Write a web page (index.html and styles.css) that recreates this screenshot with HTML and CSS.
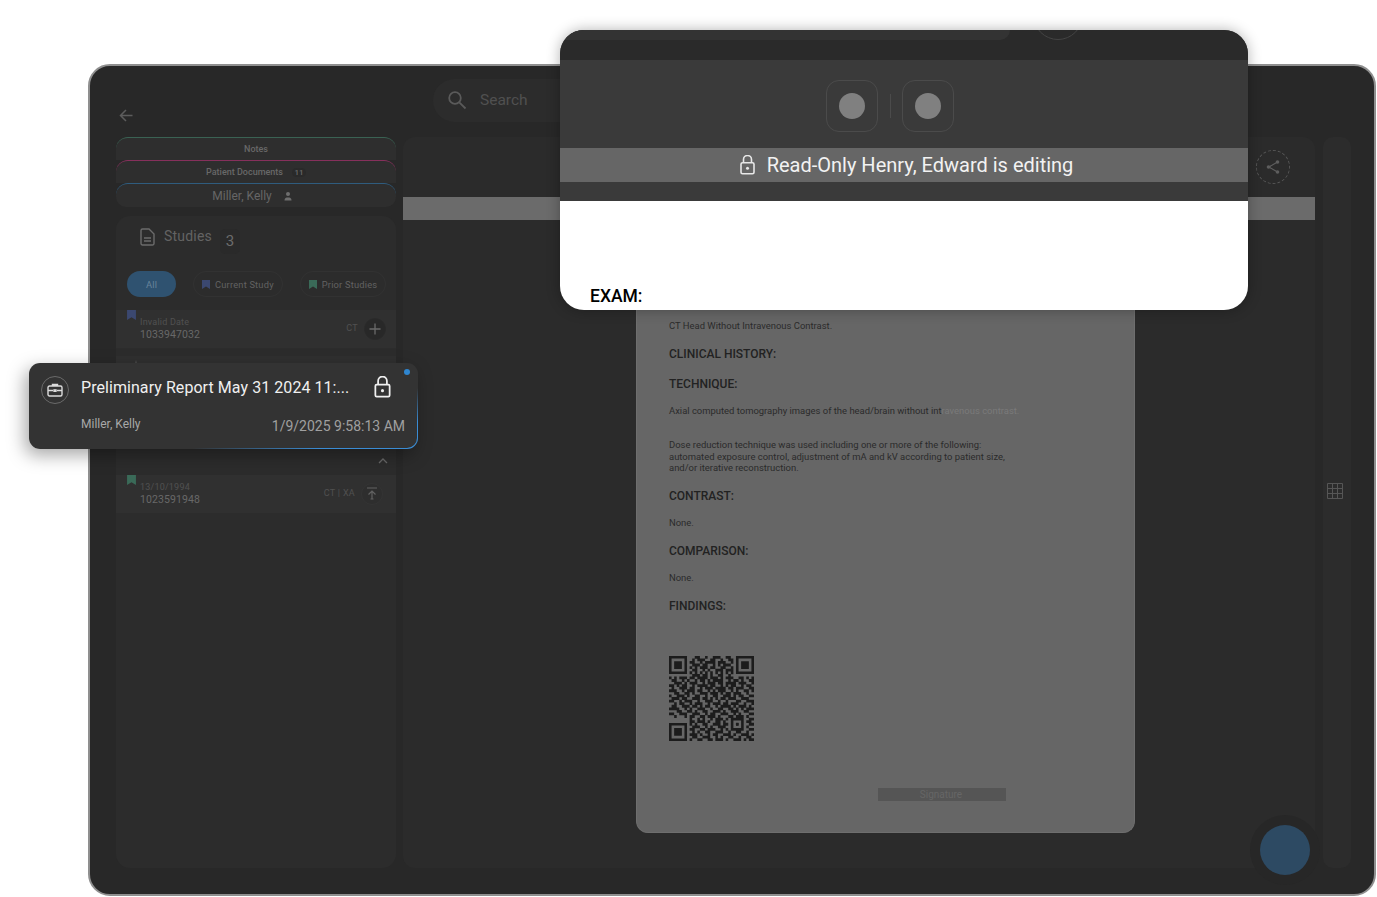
FILE: index.html
```html
<!DOCTYPE html>
<html lang="en">
<head>
    <meta charset="utf-8">
    <title>Read-only report</title>
    <link rel="stylesheet" href="styles.css">
</head>
<body>
<div class="app">
    <header class="top">
        <div class="back">
            <svg width="14" height="13" viewBox="0 0 14 13"><path d="M13.500 6.500H1.500M7 1L1.500 6.500 7 12" fill="none" stroke="#5c5c5c" stroke-width="1.500"/></svg>
        </div>
        <div class="search">
            <svg width="20" height="20" viewBox="0 0 20 20"><circle cx="8" cy="8" r="5.800" fill="none" stroke="#5a5a5a" stroke-width="1.800"/><path d="M12.300 12.300L18.500 18.500" stroke="#5a5a5a" stroke-width="1.800"/></svg>
            <span>Search</span>
        </div>
    </header>

    <div class="cols">
        <aside class="side">
            <div class="tabs">
                <div class="tab tab-notes">Notes</div>
                <div class="tab tab-docs">Patient Documents <span class="tab-count">11</span></div>
                <div class="tab tab-patient">Miller, Kelly
                    <svg width="10" height="10" viewBox="0 0 10 10"><circle cx="5" cy="3" r="2" fill="#6e6e6e"/><path d="M1.500 9.500c0-2.500 1.500-3 3.500-3s3.500.5 3.500 3z" fill="#6e6e6e"/></svg>
                </div>
            </div>
            <section class="studies">
                <div class="studies-head">
                    <svg width="15" height="18" viewBox="0 0 15 18"><path d="M2.500 1h6.500l5 5v9.500a1.500 1.500 0 0 1-1.500 1.500h-10A1.500 1.500 0 0 1 1 15.500v-13A1.500 1.500 0 0 1 2.500 1zM4 10h7M4 13h7" fill="none" stroke="#6b6b6b" stroke-width="1.400"/></svg>
                    <span class="studies-title">Studies</span>
                    <span class="studies-count">3</span>
                </div>
                <div class="chips">
                    <span class="chip chip-on">All</span>
                    <span class="chip">
                        <svg class="mark" width="8" height="9" viewBox="0 0 8 9"><path d="M0 0h8v9L4 6.500 0 9z" fill="#3b4870"/></svg>Current Study</span>
                    <span class="chip">
                        <svg class="mark" width="8" height="9" viewBox="0 0 8 9"><path d="M0 0h8v9L4 6.500 0 9z" fill="#3a6a58"/></svg>Prior Studies</span>
                </div>
                <div class="rows">
                    <div class="row">
                        <svg class="row-mark" width="9" height="10" viewBox="0 0 8 9"><path d="M0 0h8v9L4 6.500 0 9z" fill="#3b4870"/></svg>
                        <div class="row-info"><div class="row-date">Invalid Date</div><div class="row-id">1033947032</div></div>
                        <span class="row-mod">CT</span>
                        <span class="row-btn row-btn-dark">
                            <svg width="12" height="12" viewBox="0 0 12 12"><path d="M6 .5v11M.5 6h11" stroke="#6a6a6a" stroke-width="1.300"/></svg>
                        </span>
                    </div>
                    <div class="row">
                        <svg class="row-mark row-mark-dim" width="8" height="8" viewBox="0 0 8 8"><path d="M4 0l1 3 3 .2-2.400 2L6.500 8 4 6.400 1.500 8l.9-2.800L0 3.200 3 3z" fill="#484848"/></svg>
                    </div>
                    <div class="row"></div>
                    <div class="collapse">
                        <svg width="10" height="6" viewBox="0 0 10 6"><path d="M1 5l4-4 4 4" fill="none" stroke="#686868" stroke-width="1.300"/></svg>
                    </div>
                    <div class="row">
                        <svg class="row-mark" width="9" height="10" viewBox="0 0 8 9"><path d="M0 0h8v9L4 6.500 0 9z" fill="#3a6a58"/></svg>
                        <div class="row-info"><div class="row-date">13/10/1994</div><div class="row-id">1023591948</div></div>
                        <span class="row-mod">CT | XA</span>
                        <span class="row-btn">
                            <svg width="12" height="13" viewBox="0 0 12 13"><path d="M1 1h10M6 12V5M2.500 7.500L6 4l3.500 3.500M4.500 12h3" fill="none" stroke="#626262" stroke-width="1.200"/></svg>
                        </span>
                    </div>
                </div>
            </section>
        </aside>

        <main class="main">
            <div class="toolbar">
                <span class="share">
                    <svg width="16" height="16" viewBox="0 0 16 16"><path d="M12.500 3L4 8l8.500 5" fill="none" stroke="#5e5e5e" stroke-width="1.200"/><circle cx="12.500" cy="3" r="1.800" fill="#5e5e5e"/><circle cx="3.500" cy="8" r="1.800" fill="#5e5e5e"/><circle cx="12.500" cy="13" r="1.800" fill="#5e5e5e"/></svg>
                </span>
            </div>
            <div class="status"></div>
            <article class="doc">
                <p class="rpt">CT Head Without Intravenous Contrast.</p>
                <h3>CLINICAL HISTORY:</h3>
                <h3>TECHNIQUE:</h3>
                <p class="rpt">Axial computed tomography images of the head/brain without int<span class="fade">ravenous contrast.</span></p>
                <p class="rpt rpt-dose">Dose reduction technique was used including one or more of the following:<br>automated exposure control, adjustment of mA and kV according to patient size,<br>and/or iterative reconstruction.</p>
                <h3>CONTRAST:</h3>
                <p class="rpt">None.</p>
                <h3>COMPARISON:</h3>
                <p class="rpt">None.</p>
                <h3>FINDINGS:</h3>
                <svg class="qr" width="85" height="85" viewBox="0 0 33 33">
                    <path fill="none" stroke="#1c1c1c" d="M.5 .5h6v6h-6zM26.500 .5h6v6h-6zM.5 26.500h6v6h-6z"/>
                    <path fill="#1c1c1c" d="M2 2h3v3H2zM28 2h3v3h-3zM2 28h3v3H2zM26 26h1v1h-1z"/>
                    <path fill="none" stroke="#1c1c1c" stroke-width="1.100" d="M10 .5h2m2 0h1m2 0h3m2 0h2M9 1.500h1m1 0h3m2 0h2m2 0h1m2 0h2M8 2.500h2m2 0h1m1 0h4m1 0h3m2 0h1M9 3.500h3m1 0h2m2 0h1m1 0h1m1 0h3M8 4.500h1m1 0h1m1 0h3m1 0h2m2 0h2m2 0h1M9 5.500h2m2 0h1m1 0h1m2 0h3m1 0h3M8 6.500h1m1 0h1m1 0h1m1 0h1m1 0h1m1 0h1m1 0h1m1 0h1m1 0h1M9 7.500h3m1 0h2m1 0h1m2 0h2m2 0h1M0 8.500h1m1 0h1m1 0h3m1 0h2m1 0h4m1 0h3m1 0h1m1 0h3m2 0h2m1 0h1m1 0h1M1 9.500h2m2 0h1m1 0h1m2 0h1m1 0h2m1 0h1m1 0h4m2 0h1m1 0h2m1 0h1m2 0h2M2 10.500h3m1 0h1m1 0h3m2 0h1m1 0h3m1 0h2m1 0h4m1 0h3m2 0h1M0 11.500h2m1 0h1m1 0h2m2 0h1m1 0h4m1 0h2m2 0h1m1 0h1m1 0h2m2 0h1m1 0h2M1 12.500h1m2 0h3m1 0h2m2 0h1m1 0h3m1 0h4m1 0h2m1 0h3m2 0h2M0 13.500h3m2 0h1m1 0h3m1 0h2m2 0h1m1 0h1m1 0h3m2 0h1m1 0h1m2 0h2m1 0h1M2 14.500h2m2 0h2m1 0h1m2 0h3m1 0h3m1 0h1m1 0h2m1 0h3m2 0h1M0 15.500h1m2 0h3m1 0h1m2 0h2m2 0h1m2 0h2m2 0h3m1 0h1m1 0h2m2 0h2M1 16.500h3m1 0h2m2 0h3m1 0h2m1 0h1m1 0h1m1 0h2m1 0h3m2 0h3M0 17.500h2m2 0h1m1 0h3m2 0h1m2 0h3m2 0h1m2 0h1m3 0h2m2 0h3M2 18.500h1m1 0h2m2 0h1m1 0h3m2 0h1m1 0h3m1 0h2m1 0h3m2 0h1m2 0h1M1 19.500h2m2 0h3m1 0h2m1 0h1m1 0h2m2 0h1m1 0h4m1 0h1m1 0h3m1 0h1M0 20.500h4m2 0h1m1 0h1m2 0h3m2 0h1m2 0h2m2 0h2m1 0h1m1 0h1m1 0h3M3 21.500h2m2 0h2m1 0h1m2 0h2m2 0h3m1 0h1m2 0h3m2 0h2M0 22.500h2m2 0h3m2 0h3m2 0h1m1 0h2m2 0h3m2 0h1m1 0h1m3 0h2M2 23.500h1m3 0h1m1 0h2m2 0h2m1 0h3m1 0h1m3 0h2m1 0h3m1 0h1M8 24.500h1m2 0h1m1 0h1m2 0h1m1 0h3m1 0h1m1 0h5m2 0h2M8 25.500h2m1 0h3m1 0h1m2 0h2m1 0h1m2 0h1m3 0h1m1 0h2M8 26.500h1m1 0h1m2 0h2m2 0h3m1 0h2m1 0h1m1 0h1m1 0h1m2 0h2M9 27.500h3m2 0h1m1 0h1m2 0h3m2 0h1m3 0h1m1 0h1M8 28.500h2m2 0h2m1 0h3m2 0h1m1 0h1m1 0h5m2 0h2M9 29.500h1m1 0h1m2 0h2m2 0h3m2 0h1m2 0h2m2 0h1M8 30.500h3m1 0h1m2 0h1m1 0h2m2 0h3m1 0h1m2 0h3m1 0h1M9 31.500h2m2 0h3m2 0h1m1 0h1m2 0h2m2 0h1m2 0h2M8 32.500h1m2 0h2m2 0h2m1 0h3m1 0h1m2 0h3m1 0h1m1 0h2"/>
                </svg>
                <div class="sign">Signature</div>
            </article>
        </main>

        <div class="rail">
            <svg width="16" height="16" viewBox="0 0 16 16"><path d="M.5 .5h15v15H.5zM5.500 .5v15M10.500 .5v15M.5 5.500h15M.5 10.500h15" fill="none" stroke="#565656"/></svg>
        </div>
    </div>
    <div class="fab"></div>
</div>

<div class="popup">
    <div class="popup-top">
        <div class="popup-tab"></div>
        <div class="popup-ring"></div>
    </div>
    <div class="popup-tools">
        <span class="tool"><i></i></span>
        <span class="tool-sep"></span>
        <span class="tool"><i></i></span>
    </div>
    <div class="readonly">
        <svg width="15" height="20" viewBox="0 0 15 20"><path d="M3.500 8V4.500a4 4 0 0 1 8 0V8" fill="none" stroke="#e8e8e8" stroke-width="1.600"/><rect x="1" y="7.800" width="13" height="11" rx="1.500" fill="none" stroke="#e8e8e8" stroke-width="1.600"/><circle cx="7.500" cy="13.300" r="1.500" fill="#e8e8e8"/></svg>
        <span>Read-Only Henry, Edward is editing</span>
    </div>
    <div class="popup-gap"></div>
    <div class="popup-paper"><strong>EXAM:</strong></div>
</div>

<div class="card">
    <i class="card-dot"></i>
    <div class="card-main">
        <span class="card-icon">
            <svg width="16" height="14" viewBox="0 0 16 14"><path d="M5.500 3V1.500h5V3M2.500 3h11A1.500 1.500 0 0 1 15 4.500v7a1.500 1.500 0 0 1-1.500 1.500h-11A1.500 1.500 0 0 1 1 11.500v-7A1.500 1.500 0 0 1 2.500 3zM1 7.500h5M10 7.500h5" fill="none" stroke="#dcdcdc" stroke-width="1.400"/><rect x="6.300" y="6.200" width="3.400" height="2.800" fill="#dcdcdc"/></svg>
        </span>
        <span class="card-title">Preliminary Report May 31 2024 11:...</span>
        <svg class="card-lock" width="17" height="22" viewBox="0 0 15 20"><path d="M3.500 8V4.500a4 4 0 0 1 8 0V8" fill="none" stroke="#efefef" stroke-width="1.600"/><rect x="1" y="7.800" width="13" height="11" rx="1.200" fill="none" stroke="#efefef" stroke-width="1.600"/><circle cx="7.500" cy="13.300" r="1.400" fill="#efefef"/></svg>
    </div>
    <div class="card-foot">
        <span class="card-name">Miller, Kelly</span>
        <span class="card-date">1/9/2025 9:58:13 AM</span>
    </div>
</div>
</body>
</html>
```

FILE: styles.css
```css
*{
    box-sizing: border-box;
}
body{
    margin: 0;
    background: #fff;
    font-family: Roboto, "Liberation Sans", sans-serif;
    overflow: hidden;
}
.app{
    position: relative;
    width: 1288px;
    height: 832px;
    margin: 64px 0 0 88px;
    padding: 0 23px 26px 26px;
    background: #282828;
    border: 2px solid #8f8f8f;
    border-radius: 22px;
    display: flex;
    flex-direction: column;
}

/* header */
.top{
    height: 71px;
    display: flex;
    flex: none;
}
.back{
    width: 317px;
    padding: 41px 0 0 3px;
}
.search{
    width: 200px;
    height: 43px;
    margin-top: 13px;
    padding: 0 0 1px 14px;
    background: #2c2c2c;
    border-radius: 22px;
    display: flex;
    align-items: center;
    gap: 13px;
    color: #505050;
    font-size: 15.500px;
}

/* columns */
.cols{
    flex: 1;
    display: flex;
    min-height: 0;
}
.side{
    width: 280px;
    margin-right: 7px;
    display: flex;
    flex-direction: column;
    gap: 9px;
}
.main{
    width: 912px;
    margin-right: 8px;
    background: #2b2b2b;
    border-radius: 12px;
}
.rail{
    width: 28px;
    background: #2c2c2c;
    border-radius: 10px;
    display: flex;
    align-items: center;
    justify-content: center;
    padding: 0 4px 24px 0;
}

/* sidebar tabs */
.tabs{
    height: 70px;
    flex: none;
    display: flex;
    flex-direction: column;
}
.tab{
    height: 23px;
    background: #2e2e2e;
    border-top: 1px solid #3a6253;
    border-radius: 12px 12px 0 0;
    color: #686868;
    font-size: 9px;
    font-weight: 500;
    display: flex;
    align-items: center;
    justify-content: center;
    gap: 6px;
}
.tab-docs{
    border-top-color: #86305c;
}
.tab-patient{
    height: 24px;
    padding-right: 7px;
    border-top-color: #2f5c7e;
    border-radius: 12px 12px 10px 10px;
    font-size: 12px;
    font-weight: 400;
    color: #666;
    gap: 11px;
}
.tab-count{
    margin-left: 3px;
    width: 14px;
    text-align: center;
    font-size: 8px;
    background: #2a2a2a;
    border-radius: 7px;
}
.studies{
    flex: 1;
    background: #2c2c2c;
    border-radius: 14px;
}
.studies-head{
    height: 55px;
    padding: 12px 0 0 24px;
    display: flex;
    align-items: flex-start;
    color: #636363;
    font-size: 14px;
}
.studies-title{
    margin-left: 9px;
    letter-spacing: .2px;
}
.studies-count{
    margin: 1px 0 0 8px;
    width: 20px;
    height: 25px;
    line-height: 25px;
    text-align: center;
    background: #2a2a2a;
    border-radius: 5px;
    color: #6c6c6c;
    font-size: 15px;
}
.chips{
    height: 26px;
    padding-left: 11px;
    display: flex;
    gap: 17px;
}
.chip{
    padding: 0 8px;
    border: 1px solid #323232;
    border-radius: 13px;
    color: #626262;
    font-size: 9.300px;
    letter-spacing: .2px;
    display: flex;
    align-items: center;
    gap: 5px;
}
.chip-on{
    width: 49px;
    justify-content: center;
    background: #2f5270;
    border: 0;
    color: #68839b;
}
.rows{
    margin-top: 13px;
    display: flex;
    flex-direction: column;
    gap: 8px;
}
.row{
    position: relative;
    height: 38px;
    flex: none;
    padding: 0 10px 0 24px;
    background: #303030;
    display: flex;
    align-items: center;
}
.row-mark{
    position: absolute;
    left: 11px;
    top: 0;
}
.row-mark-dim{
    left: 16px;
    top: 4px;
}
.row-info{
    flex: 1;
}
.row-date{
    font-size: 9px;
    line-height: 11px;
    color: #505050;
    letter-spacing: .2px;
}
.row-id{
    font-size: 10.500px;
    line-height: 13px;
    color: #686868;
    letter-spacing: .1px;
}
.row-mod{
    margin: -3px 6px 0 0;
    font-size: 9px;
    color: #505050;
    letter-spacing: .3px;
}
.row-btn{
    width: 22px;
    height: 22px;
    margin: -1px 3px 0 0;
    border-radius: 50%;
    background: #2e2e2e;
    border: 1px solid #343434;
    display: flex;
    align-items: center;
    justify-content: center;
}
.row-btn-dark{
    margin-right: 0;
    background: #282828;
    border-color: #2a2a2a;
}
.collapse{
    height: 19px;
    padding: 0 8px 3px 0;
    display: flex;
    justify-content: flex-end;
    align-items: flex-end;
}

/* report viewer */
.toolbar{
    height: 60px;
    padding: 13px 25px 0 0;
    display: flex;
    justify-content: flex-end;
}
.share{
    width: 34px;
    height: 34px;
    border: 1.500px dashed #565656;
    border-radius: 50%;
    display: flex;
    align-items: center;
    justify-content: center;
}
.status{
    height: 23px;
    background: #6b6b6b;
}
.doc{
    width: 499px;
    height: 605px;
    margin: 8px 0 0 233px;
    padding: 92px 30px 0 32px;
    background: #666;
    border: 1px solid #6e6e6e;
    border-top: 0;
    border-radius: 0 0 12px 12px;
    color: #2b2b2b;
}
.rpt{
    margin: 13px 0 0;
    font-size: 9.450px;
    line-height: 12px;
    white-space: nowrap;
}
.rpt:first-child{
    margin-top: 0;
}
.rpt-dose{
    margin-top: 22px;
    line-height: 11.500px;
}
.fade{
    color: #7a7a7a;
}
.doc h3{
    margin: 14px 0 0;
    font-size: 12px;
    line-height: 16px;
    font-weight: 500;
    color: #222;
}
.qr{
    display: block;
    margin-top: 42px;
}
.sign{
    width: 128px;
    height: 13px;
    margin: 47px 0 0 209px;
    padding-right: 2px;
    background: #555;
    color: #666;
    font-size: 10px;
    line-height: 13px;
    text-align: center;
}
.fab{
    position: absolute;
    right: 64px;
    bottom: 19px;
    width: 50px;
    height: 50px;
    background: #2d4a63;
    border-radius: 50%;
    box-shadow: 0 0 0 10px #272727;
}

/* read-only popup */
.popup{
    position: absolute;
    left: 560px;
    top: 30px;
    width: 688px;
    height: 280px;
    border-radius: 24px;
    overflow: hidden;
    background: #3a3a3a;
    box-shadow: 0 0 14px rgba(0,0,0,.3);
    display: flex;
    flex-direction: column;
}
.popup-top{
    position: relative;
    height: 30px;
    flex: none;
    background: #2a2a2a;
}
.popup-tab{
    width: 450px;
    height: 10px;
    background: #333;
    border-radius: 0 0 18px 0;
}
.popup-ring{
    position: absolute;
    left: 473px;
    top: -40px;
    width: 50px;
    height: 50px;
    border: 1px solid #444;
    border-radius: 50%;
}
.popup-tools{
    height: 88px;
    flex: none;
    padding: 4px 28px 0 0;
    display: flex;
    align-items: center;
    justify-content: center;
    gap: 11.500px;
}
.tool{
    width: 52px;
    height: 52px;
    border: 1px solid #4b4b4b;
    border-radius: 13px;
    display: flex;
    align-items: center;
    justify-content: center;
}
.tool i{
    width: 26px;
    height: 26px;
    background: #808080;
    border-radius: 50%;
}
.tool-sep{
    width: 1px;
    height: 24px;
    background: #4b4b4b;
}
.readonly{
    height: 34px;
    flex: none;
    padding-left: 5px;
    background: #666;
    color: #f2f2f2;
    font-size: 20px;
    display: flex;
    align-items: center;
    justify-content: center;
    gap: 12px;
}
.popup-gap{
    height: 19px;
    flex: none;
}
.popup-paper{
    flex: 1;
    background: #fff;
    padding: 0 0 4px 30px;
    display: flex;
    align-items: flex-end;
    color: #000;
    font-size: 17.500px;
}
.popup-paper strong{
    font-weight: 500;
}

/* report card */
.card{
    position: absolute;
    left: 29px;
    top: 363px;
    width: 389px;
    height: 86px;
    padding: 0 12px 0 11px;
    border: 1.500px solid transparent;
    border-radius: 11px;
    background: linear-gradient(#333, #333) padding-box, linear-gradient(165deg, #333 68%, #3a8cd4 86%) border-box;
    box-shadow: -4px 6px 18px rgba(0,0,0,.35);
}
.card-dot{
    position: absolute;
    right: 7px;
    top: 5px;
    width: 6px;
    height: 6px;
    background: #2f86d0;
    border-radius: 50%;
}
.card-main{
    height: 47px;
    display: flex;
    align-items: center;
}
.card-icon{
    width: 28px;
    height: 28px;
    margin: 5px 12px 0 0;
    border: 1px solid #6a6a6a;
    border-radius: 50%;
    display: flex;
    align-items: center;
    justify-content: center;
}
.card-title{
    width: 293px;
    color: #f0f0f0;
    font-size: 16px;
    letter-spacing: .06px;
    white-space: nowrap;
}
.card-lock{
    margin-top: -2px;
}
.card-foot{
    padding: 0 0 0 40px;
    display: flex;
    justify-content: space-between;
    align-items: center;
    height: 26px;
}
.card-name{
    color: #a8a8a8;
    font-size: 12px;
}
.card-date{
    color: #a0a0a0;
    font-size: 14px;
    margin-top: 4px;
}
```
